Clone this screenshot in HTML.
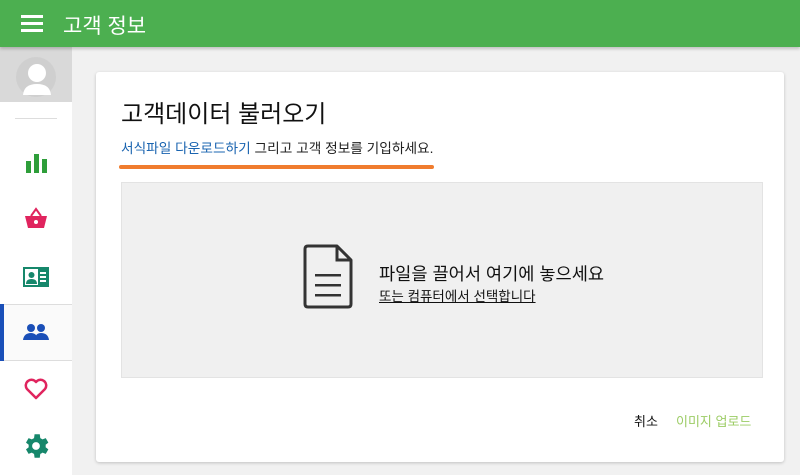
<!DOCTYPE html>
<html><head><meta charset="utf-8"><style>
*{margin:0;padding:0;box-sizing:border-box}
body{width:800px;height:475px;overflow:hidden;background:#f1f1f1;font-family:"Liberation Sans","Noto Sans CJK KR",sans-serif;position:relative}
.hdr{position:absolute;left:0;top:0;width:800px;height:47px;background:#4caf50;box-shadow:0 2px 3px rgba(0,0,0,.2);z-index:2}
.hdr .t{position:absolute;left:63px;top:10px;color:#fff;font-size:21px}
.side{position:absolute;left:0;top:47px;width:72px;height:428px;background:#fff}
.av{position:absolute;left:0;top:0;width:72px;height:55px;background:#d9d9d9;overflow:hidden}
.ic{position:absolute;left:0;width:72px;display:flex;justify-content:center;align-items:center}
.card{position:absolute;left:96px;top:72px;width:688px;height:390px;background:#fff;border-radius:3px;box-shadow:0 1px 3px rgba(0,0,0,.2)}
</style></head><body>
<div class="hdr">
<svg style="position:absolute;left:21px;top:15px" width="22" height="17"><rect y="0" width="22" height="3" fill="#fff"/><rect y="7" width="22" height="3" fill="#fff"/><rect y="14" width="22" height="3" fill="#fff"/></svg>
<div class="t">고객 정보</div></div>
<div class="side">
<div class="av"><svg width="72" height="55"><circle cx="36" cy="30" r="20" fill="#cfcfcf"/><circle cx="37" cy="26" r="9" fill="#fff"/><path d="M23 48 Q24 37 37 37 Q50 37 51 48 Z" fill="#fff"/></svg></div>
<div style="position:absolute;left:15px;top:71px;width:42px;height:1px;background:#ddd"></div>
<div class="ic" style="top:103px;height:24px"><svg width="24" height="24"><rect x="2" y="11" width="5" height="12" fill="#2e9e3a"/><rect x="10" y="4" width="5" height="19" fill="#2e9e3a"/><rect x="18" y="9" width="5" height="14" fill="#2e9e3a"/></svg></div>
<div class="ic" style="top:160px;height:24px"><svg width="24" height="24"><path d="M7 9 L12 2 L17 9" stroke="#e0245e" stroke-width="2" fill="none"/><path d="M1 9 H23 L20 21 H4 Z" fill="#e0245e"/><circle cx="12" cy="15" r="2" fill="#fff"/></svg></div>
<div class="ic" style="top:218px;height:24px"><svg width="26" height="20"><rect width="26" height="20" fill="#16876b"/><rect x="2" y="2" width="13" height="16" fill="#fff"/><circle cx="8.5" cy="8" r="3" fill="#16876b"/><path d="M3 17 Q3 12 8.5 12 Q14 12 14 17Z" fill="#16876b"/><rect x="17" y="5" width="6" height="2" fill="#fff"/><rect x="17" y="9" width="6" height="2" fill="#fff"/><rect x="17" y="13" width="6" height="2" fill="#fff"/></svg></div>
<div style="position:absolute;left:0;top:257px;width:72px;height:57px;background:#fafafa;border-top:1px solid #ddd;border-bottom:1px solid #ddd"></div>
<div style="position:absolute;left:0;top:257px;width:4px;height:57px;background:#1a4fb8"></div>
<div class="ic" style="top:274px;height:22px"><svg width="26" height="18"><circle cx="8" cy="5" r="4" fill="#1a4fb8"/><circle cx="18" cy="5" r="4" fill="#1a4fb8"/><path d="M0 17 Q1 10 8 10 Q14 10 15 17Z" fill="#1a4fb8"/><path d="M12 17 Q12 10 18 10 Q25 10 26 17Z" fill="#1a4fb8"/></svg></div>
<div class="ic" style="top:330px;height:24px"><svg width="24" height="22"><path d="M12 20 L3 11 A5 5 0 0 1 12 4 A5 5 0 0 1 21 11 Z" stroke="#e0245e" stroke-width="2.5" fill="none" stroke-linejoin="round"/></svg></div>
<div class="ic" style="top:386px;height:26px"><svg width="26" height="26" viewBox="2 2 20 20"><path fill="#16876b" d="M19.4 13a7.5 7.5 0 0 0 0-2l2.1-1.6-2-3.5-2.5 1a7.4 7.4 0 0 0-1.7-1L14.9 3h-4l-.4 2.9a7.4 7.4 0 0 0-1.7 1l-2.5-1-2 3.5L6.4 11a7.5 7.5 0 0 0 0 2l-2.1 1.6 2 3.5 2.5-1a7.4 7.4 0 0 0 1.7 1l.4 2.9h4l.4-2.9a7.4 7.4 0 0 0 1.7-1l2.5 1 2-3.5zM12 15A3 3 0 1 1 12 9a3 3 0 0 1 0 6z"/></svg></div>
</div>
<div class="card">
<div style="position:absolute;left:25px;top:22px;font-size:24px;color:#111">고객데이터 불러오기</div>
<div style="position:absolute;left:25px;top:65px;font-size:13.7px;color:#222"><span style="color:#1a64b0">서식파일 다운로드하기</span> 그리고 고객 정보를 기입하세요.</div>
<div style="position:absolute;left:23px;top:93px;width:315px;height:4px;border-radius:2px;background:#f07c2e"></div>
<div style="position:absolute;left:25px;top:110px;width:642px;height:196px;background:#f0f0f0;border:1px solid #e3e3e3"></div>
<svg style="position:absolute;left:207px;top:172px" width="52" height="66"><path d="M5 2 H34 L48 16 V60 Q48 63 45 63 H5 Q2 63 2 60 V5 Q2 2 5 2Z" fill="none" stroke="#333" stroke-width="3" stroke-linejoin="round"/><path d="M34 2 V16 H48" fill="none" stroke="#333" stroke-width="3"/><rect x="12" y="30" width="26" height="2.5" fill="#333"/><rect x="12" y="40" width="26" height="2.5" fill="#333"/><rect x="12" y="50" width="26" height="2.5" fill="#333"/></svg>
<div style="position:absolute;left:283px;top:189px;font-size:17.6px;color:#111">파일을 끌어서 여기에 놓으세요</div>
<div style="position:absolute;left:283px;top:213px;font-size:13.5px;color:#111;text-decoration:underline">또는 컴퓨터에서 선택합니다</div>
<div style="position:absolute;left:538px;top:339px;font-size:13px;color:#111">취소</div>
<div style="position:absolute;left:580px;top:339px;font-size:13px;color:#9ccc65">이미지 업로드</div>
</div>
</body></html>
